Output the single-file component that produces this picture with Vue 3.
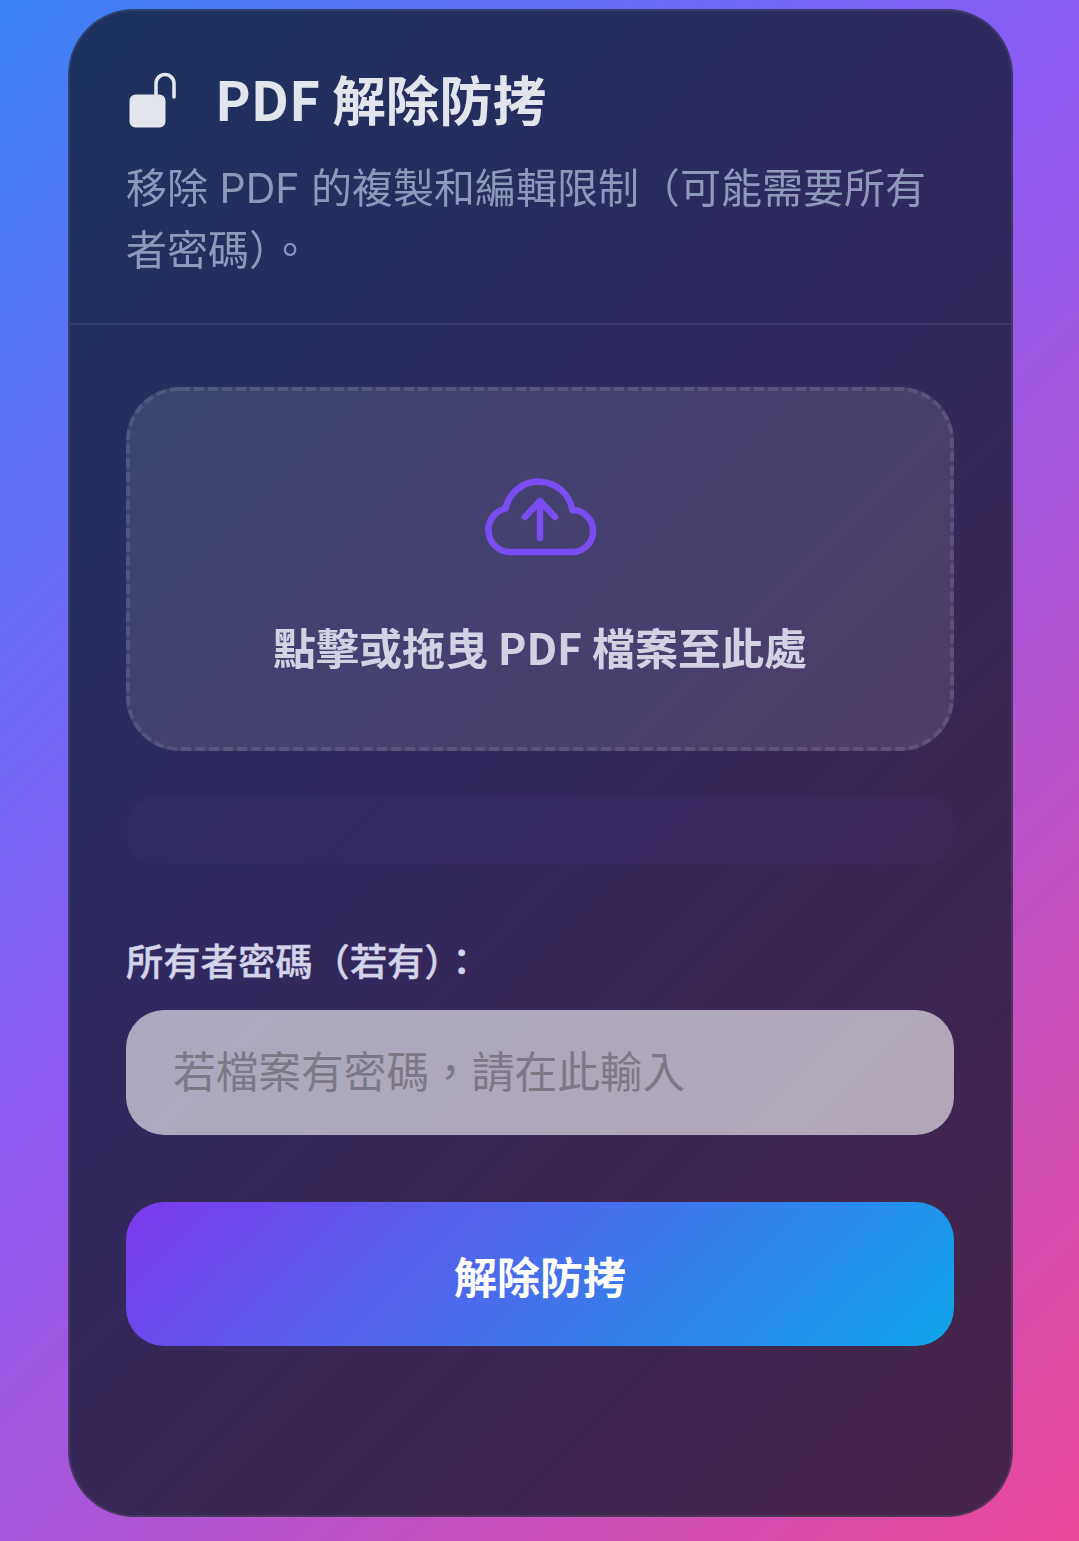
<script setup>
const title = 'PDF 解除防拷'
</script>

<template>
  <div class="page">
    <main class="card">
      <header class="head">
        <div class="title-row">
          <svg class="lock" viewBox="0 0 48 56" aria-hidden="true">
            <path d="M6.500 22.500h24a6 6 0 0 1 6 6v21a6 6 0 0 1-6 6h-24a6 6 0 0 1-6-6v-21a6 6 0 0 1 6-6z" fill="#e2e5ec"/>
            <path d="M27 25V11.500a9 9 0 0 1 18 0V25" fill="none" stroke="#e2e5ec" stroke-width="3.600" stroke-linecap="round"/>
          </svg>
          <h1>{{ title }}</h1>
        </div>
        <p class="sub">移除 PDF 的複製和編輯限制（可能需要所有者密碼）。</p>
      </header>
      <section class="body">
        <div class="drop">
          <svg class="dash" viewBox="0 0 828 364" aria-hidden="true">
            <rect x="2" y="2" width="824" height="360" rx="52" ry="52" fill="none" stroke="#ffffff" stroke-opacity="0.1" stroke-width="4" stroke-dasharray="10 4"/>
          </svg>
          <svg class="cloud" viewBox="0 0 112 78" aria-hidden="true">
            <path d="M25 74H88A21 21 0 0 0 88.300 32A34 34 0 0 0 21.500 30.600A22 22 0 0 0 25 74Z" fill="none" stroke="#7a4df0" stroke-width="6.500" stroke-linejoin="round"/>
            <path d="M56 60V23M41 39L56 23L71 39" fill="none" stroke="#7a4df0" stroke-width="6.500" stroke-linecap="round" stroke-linejoin="round"/>
          </svg>
          <div class="drop-text">點擊或拖曳 PDF 檔案至此處</div>
        </div>
        <div class="status"></div>
        <label class="label" for="pw">所有者密碼（若有）：</label>
        <input id="pw" class="input" type="password" placeholder="若檔案有密碼，請在此輸入" />
        <button class="btn" type="button">解除防拷</button>
      </section>
    </main>
  </div>
</template>

<style>
html, body { margin: 0; padding: 0; }
</style>

<style scoped>
.page {
  box-sizing: border-box;
  width: 1079px;
  height: 1541px;
  padding: 9px 66px 24px 68px;
  background: linear-gradient(135deg, #3b82f6 0%, #8b5cf6 42%, #ec4899 100%);
  font-family: "Noto Sans CJK TC", "Noto Sans", sans-serif;
}
.card {
  box-sizing: border-box;
  height: 1508px;
  border: 2px solid rgba(255, 255, 255, 0.08);
  border-radius: 66px;
  background: rgba(15, 23, 42, 0.74);
  overflow: hidden;
}
.head {
  box-sizing: border-box;
  height: 314px;
  padding: 49px 56px 0;
  border-bottom: 2px solid rgba(255, 255, 255, 0.07);
}
.title-row { display: flex; align-items: center; gap: 38px; height: 76px; }
.lock { width: 48px; height: 56px; flex: none; margin: 4px 0 0 3px; }
h1 {
  margin: 0;
  font-size: 53.500px;
  line-height: 76px;
  font-weight: 700;
  color: #e2e5ec;
}
.sub {
  margin: 21px 0 0;
  font-family: "Inter", "Noto Sans CJK TC", sans-serif;
  font-size: 41px;
  line-height: 62px;
  color: #9aa5c6;
  opacity: 0.9;
}
.body {
  padding: 62px 57px 0 56px;
  display: flex;
  flex-direction: column;
}
.drop {
  position: relative;
  box-sizing: border-box;
  height: 364px;
  border-radius: 54px;
  background: rgba(255, 255, 255, 0.11);
  display: flex;
  flex-direction: column;
  align-items: center;
  padding-top: 91px;
}
.dash {
  position: absolute;
  inset: 0;
  width: 100%;
  height: 100%;
}
.cloud { width: 112px; height: 78px; overflow: visible; }
.drop-text {
  margin-top: 58px;
  font-size: 43px;
  line-height: 64px;
  font-weight: 700;
  color: #e2e2f0;
  opacity: 0.9;
}
.status {
  height: 68px;
  margin-top: 45px;
  border-radius: 28px;
  background: rgba(139, 92, 246, 0.045);
  filter: blur(2px);
}
.label {
  margin-top: 68px;
  font-size: 37.300px;
  line-height: 56px;
  font-weight: 500;
  color: #d3d3ea;
  -webkit-text-stroke: 0.4px #d3d3ea;
}
.input {
  box-sizing: border-box;
  height: 125px;
  margin-top: 22px;
  padding: 0 47px 8px;
  border: 0;
  border-radius: 38px;
  background: rgba(255, 255, 255, 0.6);
  font: inherit;
  font-size: 42.700px;
  outline: none;
}
.input::placeholder { color: #7d7885; opacity: 1; }
.btn {
  height: 144px;
  margin-top: 67px;
  padding: 2px 0 0;
  border: 0;
  border-radius: 38px;
  background: linear-gradient(135deg, #7c3aed, #0ea5e9);
  color: #fff;
  font: inherit;
  font-size: 43px;
  font-weight: 700;
}
</style>
